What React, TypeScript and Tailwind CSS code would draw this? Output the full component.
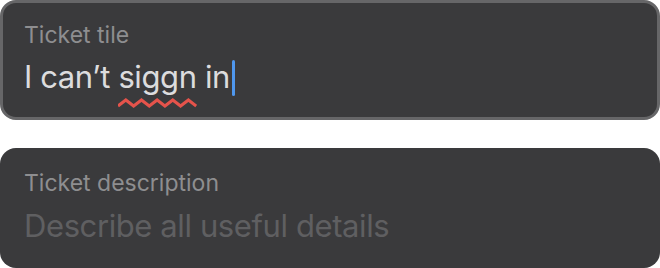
import React from 'react';

const Squiggle: React.FC = () => (
  <svg
    className="absolute left-0 top-full mt-[1px] w-full h-[10px]"
    viewBox="0 0 77 10"
    preserveAspectRatio="none"
    fill="none"
  >
    <polyline
      points="0,8 7.7,2 15.4,8 23.1,2 30.8,8 38.5,2 46.2,8 53.9,2 61.6,8 69.3,2 77,8"
      stroke="#e5534b"
      strokeWidth="3"
      strokeLinejoin="miter"
    />
  </svg>
);

export default function App() {
  return (
    <div
      className="w-[660px] h-[268px] bg-white flex flex-col gap-[28px]"
      style={{ fontFamily: 'Inter, "Noto Sans", sans-serif' }}
    >
      <div className="h-[120px] rounded-[16px] border-[3px] border-[#666668] bg-[#3a3a3c] px-[21px] pt-[18px]">
        <p className="text-[23px] leading-[28px] text-[#8e8e90]">Ticket tile</p>
        <div className="flex items-center h-[40px] mt-[8px]">
          <span className="text-[31px] leading-[40px] text-[#dcdcde] whitespace-pre tracking-[-0.4px]">
            I can’t{' '}
            <span className="relative inline-block">
              siggn
              <Squiggle />
            </span>{' '}
            in
          </span>
          <span className="ml-[2px] mt-[2px] w-[3px] h-[36px] rounded-full bg-[#4f97ee]" />
        </div>
      </div>

      <div className="h-[120px] rounded-[16px] border-[3px] border-transparent bg-[#3a3a3c] px-[21px] pt-[18px]">
        <p className="text-[23px] leading-[28px] text-[#8e8e90]">Ticket description</p>
        <div className="flex items-center h-[40px] mt-[9px]">
          <span className="text-[31px] leading-[40px] text-[#5f5f61] tracking-[-0.4px]">
            Describe all useful details
          </span>
        </div>
      </div>
    </div>
  );
}
